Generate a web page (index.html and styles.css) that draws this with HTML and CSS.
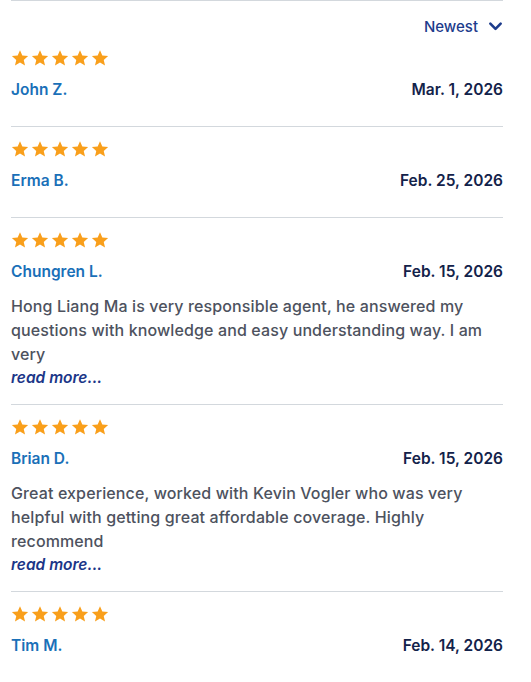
FILE: index.html
```html
<!DOCTYPE html>
<html lang="en">
<head>
<meta charset="utf-8">
<title>Reviews</title>
<link rel="stylesheet" href="styles.css">
</head>
<body>
<svg width="0" height="0" class="defs">
  <defs>
    <symbol id="star" viewBox="0 0 24 24">
      <path d="M12 1.6l3.1 7.1 7.7.7-5.8 5.1 1.7 7.6L12 18.1l-6.7 4 1.7-7.6-5.8-5.1 7.7-.7z"/>
    </symbol>
  </defs>
</svg>
<main class="reviews">
  <div class="sort">
    <span class="sort-label">Newest</span>
    <svg class="chev" viewBox="0 0 16 16"><path d="M2.5 5l5.5 5.5L13.5 5" fill="none" stroke="currentColor" stroke-width="2.8" stroke-linecap="round" stroke-linejoin="round"/></svg>
  </div>

  <article class="review">
    <div class="stars"><svg><use href="#star"/></svg><svg><use href="#star"/></svg><svg><use href="#star"/></svg><svg><use href="#star"/></svg><svg><use href="#star"/></svg></div>
    <div class="meta"><span class="name">John Z.</span><span class="date">Mar. 1, 2026</span></div>
  </article>

  <article class="review">
    <div class="stars"><svg><use href="#star"/></svg><svg><use href="#star"/></svg><svg><use href="#star"/></svg><svg><use href="#star"/></svg><svg><use href="#star"/></svg></div>
    <div class="meta"><span class="name">Erma B.</span><span class="date">Feb. 25, 2026</span></div>
  </article>

  <article class="review">
    <div class="stars"><svg><use href="#star"/></svg><svg><use href="#star"/></svg><svg><use href="#star"/></svg><svg><use href="#star"/></svg><svg><use href="#star"/></svg></div>
    <div class="meta"><span class="name">Chungren L.</span><span class="date">Feb. 15, 2026</span></div>
    <p class="text">Hong Liang Ma is very responsible agent, he answered my questions with knowledge and easy understanding way. I am very</p>
    <a class="more" href="#">read more...</a>
  </article>

  <article class="review">
    <div class="stars"><svg><use href="#star"/></svg><svg><use href="#star"/></svg><svg><use href="#star"/></svg><svg><use href="#star"/></svg><svg><use href="#star"/></svg></div>
    <div class="meta"><span class="name">Brian D.</span><span class="date">Feb. 15, 2026</span></div>
    <p class="text">Great experience, worked with Kevin Vogler who was very helpful with getting great affordable coverage. Highly recommend</p>
    <a class="more" href="#">read more...</a>
  </article>

  <article class="review">
    <div class="stars"><svg><use href="#star"/></svg><svg><use href="#star"/></svg><svg><use href="#star"/></svg><svg><use href="#star"/></svg><svg><use href="#star"/></svg></div>
    <div class="meta"><span class="name">Tim M.</span><span class="date">Feb. 14, 2026</span></div>
  </article>
</main>
</body>
</html>
```
FILE: styles.css
```css
html, body {
  margin: 0;
  padding: 0;
  background: #ffffff;
}
body {
  font-family: Inter, "Noto Sans", sans-serif;
  font-size: 15px;
  color: #4a4f5b;
}
.defs {
  position: absolute;
  width: 0;
  height: 0;
}
.reviews {
  width: 492px;
  margin-left: 11px;
  border-top: 1px solid #d3d8dd;
}
.sort {
  display: flex;
  justify-content: flex-end;
  align-items: center;
  gap: 10px;
  padding-top: 15px;
  height: 20px;
  color: #1d3c8c;
  font-size: 15px;
  font-weight: 500;
}
.chev {
  width: 15px;
  height: 15px;
}
.review {
  padding: 13px 0 14px;
  border-bottom: 1px solid #d3d8dd;
}
.review:last-child {
  border-bottom: none;
}
.stars {
  display: flex;
  gap: 2px;
  height: 18px;
  align-items: center;
}
.stars svg {
  width: 18px;
  height: 18px;
  fill: #f99f1b;
}
.meta {
  display: flex;
  justify-content: space-between;
  align-items: center;
  margin: 12px 0 11px;
  line-height: 22px;
  font-size: 15.5px;
  font-weight: 600;
}
.name {
  color: #1a70b8;
}
.date {
  color: #13224a;
}
.text {
  margin: 0;
  line-height: 24px;
  font-size: 16px;
  letter-spacing: 0.12px;
  font-weight: 500;
  color: #4d525e;
}
.more {
  display: block;
  line-height: 24px;
  font-size: 15.5px;
  font-style: italic;
  font-weight: 600;
  color: #1b3688;
  text-decoration: none;
}
```
